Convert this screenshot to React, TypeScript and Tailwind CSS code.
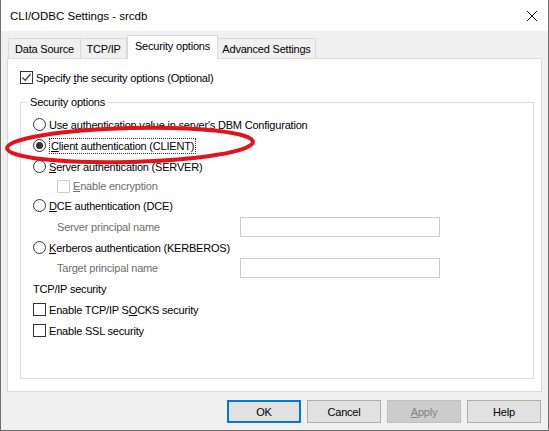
import React from 'react'

const font = { fontFamily: '"Liberation Sans", Arial, sans-serif' }

function Radio({ checked }: { checked?: boolean }) {
  return (
    <span className="flex h-[13px] w-[13px] shrink-0 items-center justify-center rounded-full border border-[#333] bg-white">
      {checked && <span className="h-[7px] w-[7px] rounded-full bg-[#333]" />}
    </span>
  )
}

function Check({ checked, disabled }: { checked?: boolean; disabled?: boolean }) {
  return (
    <span
      className={`flex h-[13px] w-[13px] shrink-0 items-center justify-center border bg-white ${
        disabled ? 'border-[#cccccc]' : 'border-[#333]'
      }`}
    >
      {checked && (
        <svg width="11" height="11" viewBox="0 0 11 11">
          <path d="M1.5 5.5 L4.2 8.3 L9.5 2" fill="none" stroke="#333" strokeWidth="1.2" />
        </svg>
      )}
    </span>
  )
}

function Btn({ children, primary, disabled }: { children: React.ReactNode; primary?: boolean; disabled?: boolean }) {
  let cls = 'border-[#adadad] bg-[#e1e1e1] text-black'
  if (primary) cls = 'border-[#0078d7] bg-[#e1e1e1] text-black outline outline-1 outline-[#0078d7] -outline-offset-2'
  if (disabled) cls = 'border-[#bfbfbf] bg-[#cccccc] text-[#838383]'
  return (
    <div className={`flex h-[23px] w-[74px] items-center justify-center border ${cls}`}>{children}</div>
  )
}

export default function App() {
  return (
    <div
      className="relative h-[431px] w-[549px] overflow-hidden whitespace-nowrap text-[11px] leading-[14px] tracking-[-0.2px] text-black"
      style={font}
    >
      <div className="flex h-[431px] w-[549px] flex-col border border-t-0 border-[#6e6e6e] bg-[#f0f0f0]">
        {/* Title bar */}
        <div className="flex h-[31px] shrink-0 items-center justify-between bg-white pl-[9px] pr-[9px]">
          <span className="text-[11.5px] tracking-normal">CLI/ODBC Settings - srcdb</span>
          <svg width="12" height="12" viewBox="0 0 12 12" className="mr-[1px]">
            <path d="M1 1 L11 11 M11 1 L1 11" stroke="#111" strokeWidth="1" />
          </svg>
        </div>

        {/* Tabs */}
        <div className="px-[6px] pt-[3px]">
          <div className="relative z-10 flex h-[24px] items-end pl-[1px]">
            <div className="flex h-[20px] w-[73px] items-center justify-center border border-b-0 border-[#d9d9d9] bg-[#f0f0f0]">Data Source</div>
            <div className="flex h-[20px] w-[46px] items-center justify-center border border-b-0 border-l-0 border-[#d9d9d9] bg-[#f0f0f0]">TCP/IP</div>
            <div className="-mb-[1px] flex h-[24px] w-[91px] items-center justify-center border border-b-0 border-[#d9d9d9] bg-white pb-[3px]">Security options</div>
            <div className="flex h-[20px] w-[98px] items-center justify-center border border-b-0 border-l-0 border-[#d9d9d9] bg-[#f0f0f0]">Advanced Settings</div>
          </div>
          <div className="h-[334px] border border-[#d9d9d9] bg-white px-[12px] pt-[12px]">
            <div className="flex h-[13px] items-center gap-[3px]">
              <Check checked />
              <span>
                Specify <u>t</u>he security options (Optional)
              </span>
            </div>

            {/* Group box */}
            <div className="relative mt-[18px] h-[277px] w-[514px] border border-[#dcdcdc] pl-[12px] pt-[11px]">
              <span className="absolute -top-[8px] left-[7px] bg-white px-[2px]">Security options</span>
              <div className="flex h-[21px] items-center gap-[3px]">
                <Radio />
                <span>Use authentication value in server's DBM Configuration</span>
              </div>
              <div className="flex h-[21px] items-center gap-[3px]">
                <Radio checked />
                <span className="border border-dotted border-[#333] px-[1px]">
                  <u>C</u>lient authentication (CLIENT)
                </span>
              </div>
              <div className="flex h-[21px] items-center gap-[3px]">
                <Radio />
                <span>
                  <u>S</u>erver authentication (SERVER)
                </span>
              </div>
              <div className="flex h-[18px] items-center gap-[3px] pl-[24px] text-[#6d6d6d]">
                <Check disabled />
                <span>
                  <u>E</u>nable encryption
                </span>
              </div>
              <div className="flex h-[21px] items-center gap-[3px]">
                <Radio />
                <span>
                  <u>D</u>CE authentication (DCE)
                </span>
              </div>
              <div className="flex h-[21px] items-center pl-[24px] text-[#6d6d6d]">
                <span className="w-[183px]">Server principal name</span>
                <div className="h-[20px] w-[200px] border border-[#cccccc] bg-white" />
              </div>
              <div className="flex h-[21px] items-center gap-[3px]">
                <Radio />
                <span>
                  <u>K</u>erberos authentication (KERBEROS)
                </span>
              </div>
              <div className="flex h-[20px] items-center pl-[24px] text-[#6d6d6d]">
                <span className="w-[183px]">Target principal name</span>
                <div className="h-[20px] w-[200px] border border-[#cccccc] bg-white" />
              </div>
              <div className="flex h-[21px] items-center">TCP/IP security</div>
              <div className="flex h-[21px] items-center gap-[3px]">
                <Check />
                <span>
                  Enable TCP/IP S<u>O</u>CKS security
                </span>
              </div>
              <div className="flex h-[21px] items-center gap-[3px]">
                <Check />
                <span>Enable SSL security</span>
              </div>
            </div>
          </div>
        </div>

        {/* Buttons */}
        <div className="flex justify-end gap-[6px] pr-[7px] pt-[8px]">
          <Btn primary>OK</Btn>
          <Btn>Cancel</Btn>
          <Btn disabled>
            <u>A</u>pply
          </Btn>
          <Btn>Help</Btn>
        </div>
      </div>

      {/* Red annotation ellipse */}
      <svg className="pointer-events-none absolute left-0 top-0" width="549" height="431">
        <ellipse cx="130" cy="145" rx="123" ry="17" fill="none" stroke="#e3131c" strokeWidth="4" transform="rotate(-1.5 130 145)" />
      </svg>
    </div>
  )
}
